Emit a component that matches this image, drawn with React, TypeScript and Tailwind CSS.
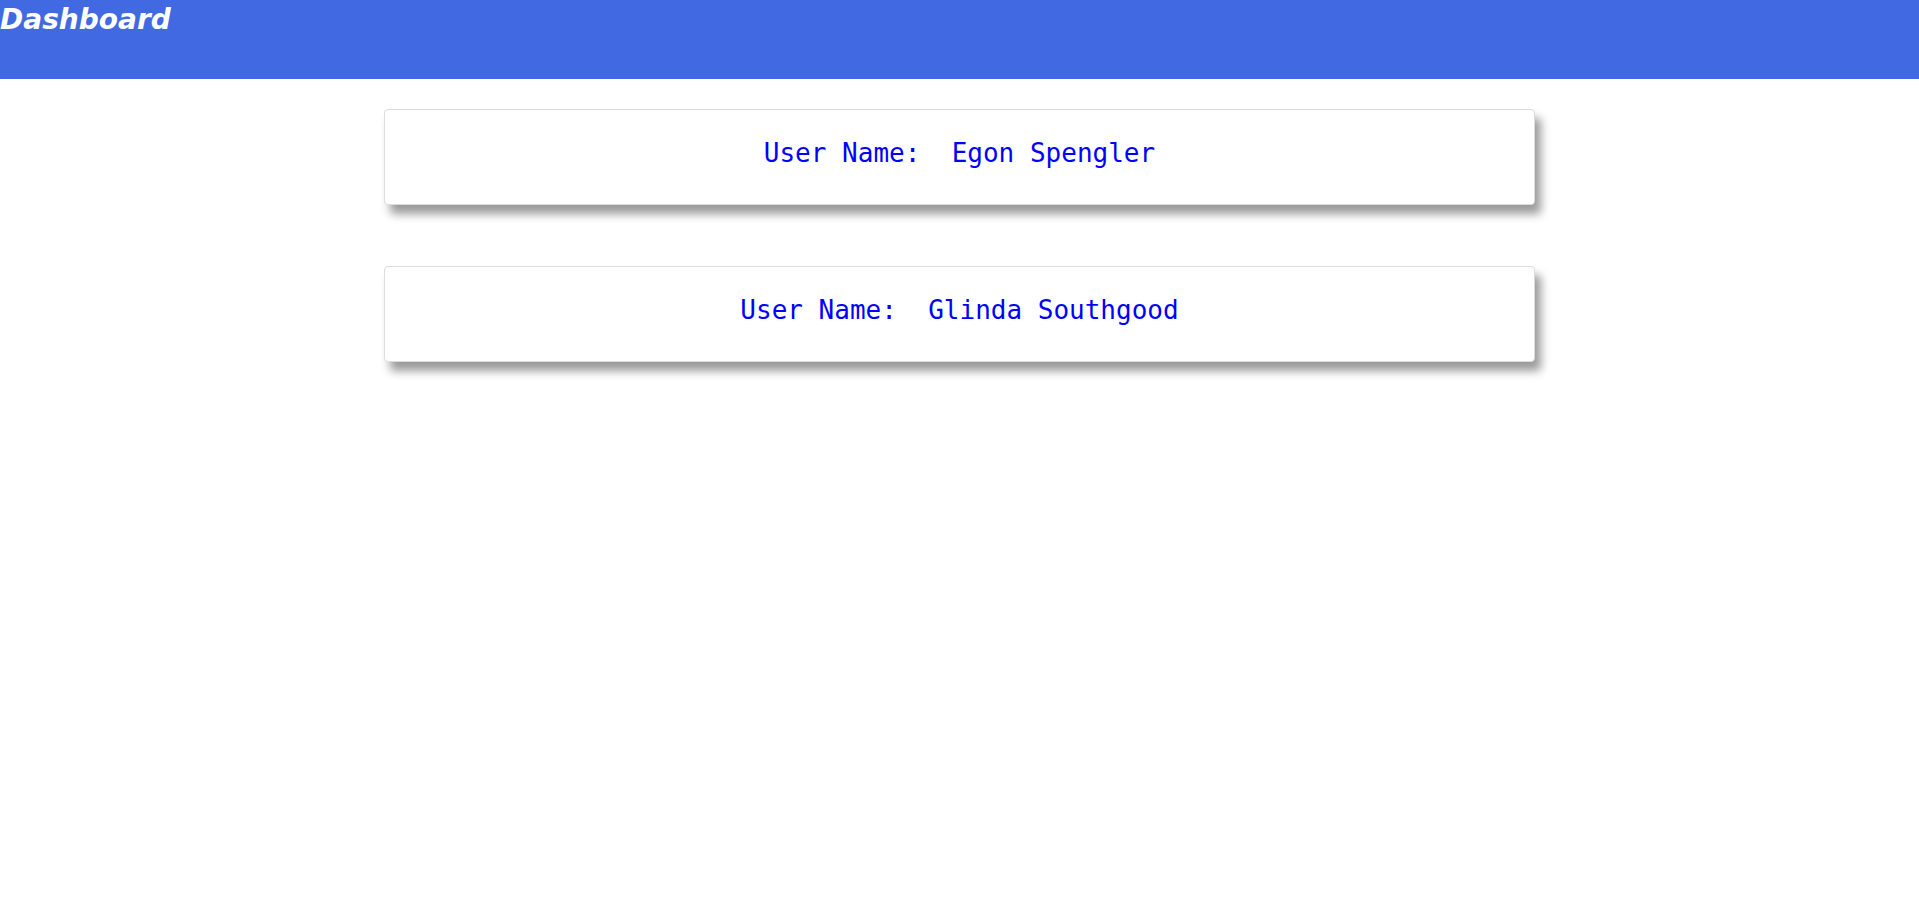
const users = ["Egon Spengler", "Glinda Southgood"];

function UserCard({ name }: { name: string }) {
  return (
    <div className="w-[60%] h-[96px] flex items-center justify-center bg-white border border-[#dcdcdc] rounded-[4px] shadow-[6px_9px_10px_rgba(0,0,0,0.4)]">
      <p className="text-[26px] text-[#0000ff] font-['DejaVu_Sans_Mono',monospace] whitespace-pre -mt-[7px]">
        {"User Name:  " + name}
      </p>
    </div>
  );
}

export default function App() {
  return (
    <div className="min-h-screen bg-white">
      {/* Header */}
      <header className="h-[79px] bg-[#4169e1] pt-[3px]">
        <h1 className="text-[28px] leading-[34px] font-bold italic text-white font-['DejaVu_Sans',sans-serif]">
          Dashboard
        </h1>
      </header>

      {/* User list */}
      <div className="flex flex-col items-center gap-[61px] pt-[30px]">
        {users.map((u) => (
          <UserCard key={u} name={u} />
        ))}
      </div>
    </div>
  );
}
